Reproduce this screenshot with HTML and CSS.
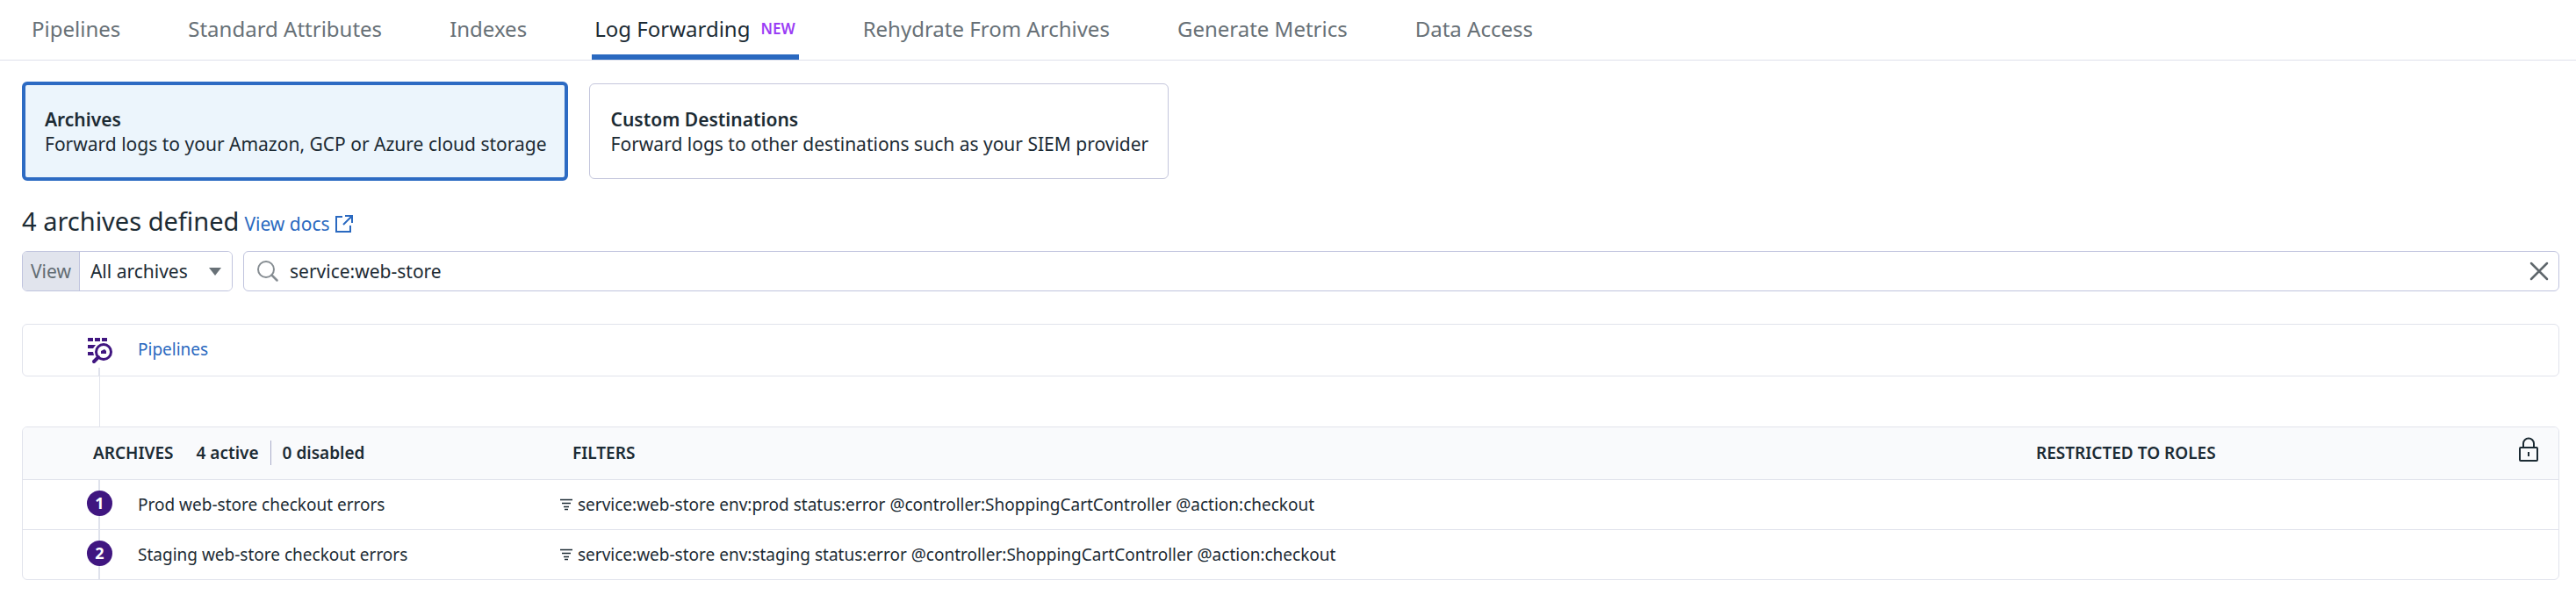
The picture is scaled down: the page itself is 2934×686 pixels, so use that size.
FILE: index.html
```html
<!DOCTYPE html>
<html lang="en">
<head>
<meta charset="utf-8">
<title>Log Forwarding</title>
<link rel="stylesheet" href="styles.css">
</head>
<body>
<nav class="tabs" aria-label="Logs configuration">
  <a class="tab" href="#pipelines">Pipelines</a>
  <a class="tab" href="#attributes">Standard Attributes</a>
  <a class="tab" href="#indexes">Indexes</a>
  <a class="tab tab-active" href="#forwarding" aria-current="page">Log Forwarding <span class="tag">NEW</span></a>
  <a class="tab" href="#rehydrate">Rehydrate From Archives</a>
  <a class="tab" href="#metrics">Generate Metrics</a>
  <a class="tab" href="#access">Data Access</a>
</nav>
<main class="content">
  <div class="cards">
    <button class="card card-selected" type="button" aria-pressed="true">
      <strong class="card-title">Archives</strong>
      <span>Forward logs to your Amazon, GCP or Azure cloud storage</span>
    </button>
    <button class="card" type="button" aria-pressed="false">
      <strong class="card-title">Custom Destinations</strong>
      <span>Forward logs to other destinations such as your SIEM provider</span>
    </button>
  </div>

  <header class="heading">
    <h1 class="title">4 archives defined</h1>
    <a class="docs" href="#docs">View docs
      <svg width="20" height="20" viewBox="0 0 20 20" fill="none" stroke="currentColor" stroke-width="2" aria-hidden="true"><path d="M8 2H1v17h16v-7M11 1h8v8M19 1L9 11"/></svg>
    </a>
  </header>

  <div class="filters">
    <div class="view">
      <label class="view-label" for="view">View</label>
      <select class="view-select" id="view"><option>All archives</option></select>
    </div>
    <div class="search">
      <svg width="24" height="24" viewBox="0 0 24 24" fill="none" stroke="#868d92" stroke-width="2" stroke-linecap="round" aria-hidden="true"><circle cx="10" cy="10" r="9"/><path d="M16.500 16.500l6 6" stroke-width="2.500"/></svg>
      <input class="search-input" type="text" aria-label="Search archives" value="service:web-store">
      <button class="clear" type="button" aria-label="Clear search">
        <svg width="22" height="22" viewBox="0 0 22 22" fill="none" stroke="#5f676c" stroke-width="2.500" stroke-linecap="round" aria-hidden="true"><path d="M2 2l18 18M20 2L2 20"/></svg>
      </button>
    </div>
  </div>

  <section class="pipelines">
    <div class="rail-start">
      <svg width="28" height="30" viewBox="0 0 28 30" aria-hidden="true">
        <g fill="#401680"><path d="M0 0h6v4H0zM8 0h6v4H8zM16 0h6v4h-6zM0 8h9l-3 4H0zM0 16h6l1 4H0zM15 18v-3l2-1 2-1 2 2v3z"/></g>
        <g fill="none" stroke="#401680"><circle cx="18" cy="16" r="8.500" stroke-width="3"/><path d="M12 22l-5 5" stroke-width="4" stroke-linecap="round"/></g>
      </svg>
    </div>
    <a class="pipelines-link" href="#pipelines">Pipelines</a>
  </section>
  <div class="connector"></div>

  <div class="panel">
    <table class="archives">
      <colgroup><col class="col-rail"><col class="col-name"><col><col class="col-roles"></colgroup>
      <thead>
        <tr>
          <th class="th-archives" colspan="2" scope="col">
            <div class="summary"><span class="label">ARCHIVES</span><span class="active">4 active</span><span>0 disabled</span></div>
          </th>
          <th class="th-filters" scope="col">FILTERS</th>
          <th scope="col">
            <div class="roles"><span>RESTRICTED TO ROLES</span>
              <svg class="lock" width="24" height="28" viewBox="0 0 24 28" fill="none" stroke="#1c2b34" stroke-width="2" aria-hidden="true"><rect x="2" y="12" width="20" height="15" rx="1"/><path d="M6 12V7.500a6 6 0 0 1 12 0V12M12 17v5"/></svg>
            </div>
          </th>
        </tr>
      </thead>
      <tbody>
        <tr>
          <td class="rail"><span class="num">1</span></td>
          <td>Prod web-store checkout errors</td>
          <td><div class="query"><svg width="14" height="14" viewBox="0 0 14 14" fill="none" stroke="#1c2b34" stroke-width="1.500" aria-hidden="true"><path d="M0 1.500h14M2 5.500h10M4 9.500h6M5 12.500h4"/></svg>service:web-store env:prod status:error @controller:ShoppingCartController @action:checkout</div></td>
          <td></td>
        </tr>
        <tr>
          <td class="rail"><span class="num">2</span></td>
          <td>Staging web-store checkout errors</td>
          <td><div class="query"><svg width="14" height="14" viewBox="0 0 14 14" fill="none" stroke="#1c2b34" stroke-width="1.500" aria-hidden="true"><path d="M0 1.500h14M2 5.500h10M4 9.500h6M5 12.500h4"/></svg>service:web-store env:staging status:error @controller:ShoppingCartController @action:checkout</div></td>
          <td></td>
        </tr>
      </tbody>
    </table>
  </div>
</main>
</body>
</html>
```

FILE: styles.css
```css
* { box-sizing: border-box; }
body {
  margin: 0;
  background: #fff;
  color: #1c2b34;
  font-family: "Noto Sans", sans-serif;
  font-size: 19px;
  line-height: 28px;
}
button, input, select { font: inherit; color: inherit; }
a { color: #2a69c0; text-decoration: none; }
svg { display: block; flex: none; }

.tabs {
  display: flex;
  gap: 70px;
  padding: 0 33px;
  border-bottom: 1px solid #dfe1ec;
}
.tab {
  display: flex;
  align-items: center;
  gap: 12px;
  height: 68px;
  padding: 4px 4px 0 3px;
  border-bottom: 6px solid transparent;
  color: #687177;
  font-size: 24px;
  white-space: nowrap;
}
.tab-active { color: #1c2b34; border-color: #2a69c0; }
.tag { color: #9a3cf5; font-size: 17px; font-weight: 600; }

.content { padding: 24px 19px 24px 25px; }
.cards { display: flex; align-items: center; gap: 24px; }
.card {
  display: flex;
  flex-direction: column;
  align-items: flex-start;
  justify-content: center;
  min-height: 109px;
  padding: 0 22px 0 24px;
  border: 1px solid #c4c6dc;
  border-radius: 6px;
  background: #fff;
  font-size: 21px;
  white-space: nowrap;
}
.card-selected {
  min-height: 113px;
  padding: 0 20px 0 22px;
  border: 4px solid #2d6bc3;
  background: #ecf5fc;
}
.card-title { font-weight: 600; }

.heading { display: flex; align-items: baseline; gap: 6px; padding-top: 26px; }
.title { margin: 0; font-size: 29px; font-weight: 400; line-height: 40px; }
.docs { display: flex; align-items: center; gap: 6px; font-size: 21px; }

.filters { display: flex; gap: 12px; padding-top: 14px; }
.view, .search {
  display: flex;
  height: 46px;
  border: 1px solid #c0c4de;
  border-radius: 6px;
  background: #fff;
  font-size: 21px;
  overflow: hidden;
}
.view { width: 240px; }
.view-label {
  display: flex;
  align-items: center;
  padding: 0 9px;
  background: #e1e4ed;
  border-right: 1px solid #c0c4de;
  color: #626c73;
}
.view-select {
  flex: 1;
  min-width: 0;
  padding: 0 12px;
  border: 0;
  appearance: none;
  background: #fff url("data:image/svg+xml,%3Csvg xmlns='http://www.w3.org/2000/svg' width='14' height='9'%3E%3Cpath d='M0 0h14L7 9z' fill='%23687177'/%3E%3C/svg%3E") no-repeat right 12px center;
}
.search { flex: 1; align-items: center; gap: 13px; padding: 0 11px 0 15px; }
.search-input { flex: 1; min-width: 0; padding: 0; border: 0; outline: 0; background: none; }
.clear { padding: 0; border: 0; background: none; }

.pipelines {
  display: flex;
  align-items: center;
  height: 60px;
  margin-top: 37px;
  border: 1px solid #e1e3ec;
  border-radius: 6px;
}
.pipelines-link { padding-bottom: 2px; }
.rail-start {
  flex: none;
  width: 131px;
  height: 100%;
  padding: 15px 0 0 74px;
  background: linear-gradient(#dfe2ec, #dfe2ec) no-repeat 86px bottom / 2px 9px;
}
.connector { width: 1px; height: 57px; margin-left: 88px; background: #e1e3ec; }

.panel { border: 1px solid #e1e3ec; border-radius: 6px; overflow: hidden; }
.archives { width: 100%; border-collapse: collapse; table-layout: fixed; }
.col-rail { width: 131px; }
.col-name { width: 481px; }
.col-roles { width: 595px; }
.archives th { height: 59px; padding: 0; background: #f9fafc; font-weight: 600; text-align: left; }
.archives td { height: 57px; padding: 0; border-top: 1px solid #e1e3ec; }
.archives .th-filters { padding-left: 14px; }
.archives .th-archives { padding-left: 80px; }
.summary { display: flex; }
.label { margin-right: 26px; }
.active { margin-right: 13px; padding-right: 13px; border-right: 1px solid #a9adc9; }
.roles { display: flex; align-items: center; justify-content: space-between; padding-right: 22px; }
.lock { margin-bottom: 8px; }
.archives .rail {
  padding-left: 73px;
  background: linear-gradient(#dfe2ec, #dfe2ec) repeat-y 86px 0 / 2px 100%;
}
.num {
  display: flex;
  align-items: center;
  justify-content: center;
  width: 29px;
  height: 29px;
  margin-bottom: 3px;
  border-radius: 50%;
  background: #401680;
  color: #fff;
  font-size: 18px;
  font-weight: 700;
}
.query { display: flex; align-items: center; gap: 6px; white-space: nowrap; }
```
